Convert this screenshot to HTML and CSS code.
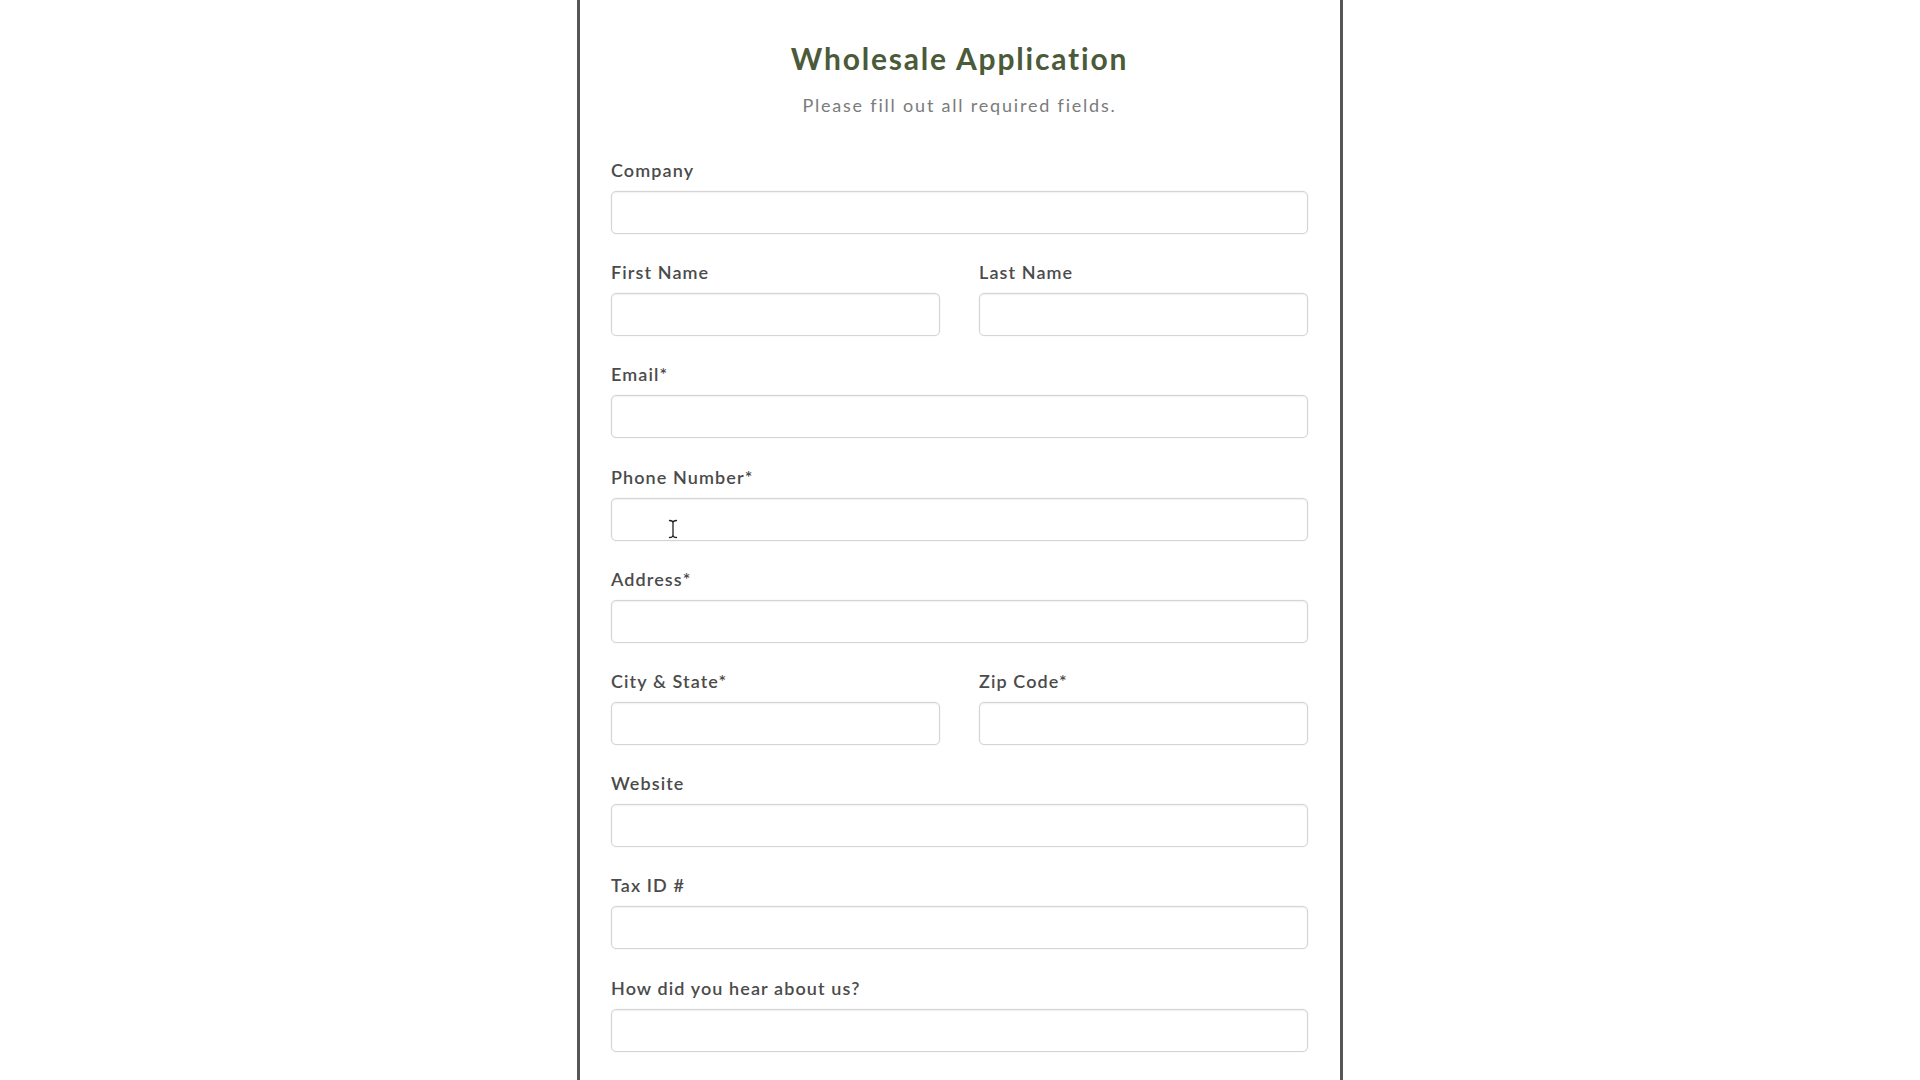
FILE: index.html
```html
<!DOCTYPE html>
<html lang="en">
<head>
<meta charset="utf-8">
<title>Wholesale Application</title>
<link rel="stylesheet" href="styles.css">
</head>
<body>
<main class="sheet">
  <header class="head">
    <h1 class="title">Wholesale Application</h1>
    <p class="subtitle">Please fill out all required fields.</p>
  </header>
  <form class="form">
    <div class="field">
      <label class="label">Company</label>
      <div class="input"></div>
    </div>
    <div class="row">
      <div class="field">
        <label class="label">First Name</label>
        <div class="input"></div>
      </div>
      <div class="field">
        <label class="label">Last Name</label>
        <div class="input"></div>
      </div>
    </div>
    <div class="field">
      <label class="label">Email*</label>
      <div class="input"></div>
    </div>
    <div class="field">
      <label class="label">Phone Number*</label>
      <div class="input has-cursor">
        <svg class="ibeam" width="10" height="20" viewBox="0 0 10 20" aria-hidden="true">
          <path d="M1.5 1.5 Q5 1.5 5 4 Q5 1.5 8.5 1.5 M5 4 V16 M1.5 18.5 Q5 18.5 5 16 Q5 18.5 8.5 18.5" fill="none" stroke="#ffffff" stroke-width="3" stroke-linecap="round"/>
          <path d="M1.5 1.5 Q5 1.5 5 4 Q5 1.5 8.5 1.5 M5 4 V16 M1.5 18.5 Q5 18.5 5 16 Q5 18.5 8.5 18.5" fill="none" stroke="#222222" stroke-width="1.3" stroke-linecap="round"/>
        </svg>
      </div>
    </div>
    <div class="field">
      <label class="label">Address*</label>
      <div class="input"></div>
    </div>
    <div class="row">
      <div class="field">
        <label class="label">City &amp; State*</label>
        <div class="input"></div>
      </div>
      <div class="field">
        <label class="label">Zip Code*</label>
        <div class="input"></div>
      </div>
    </div>
    <div class="field">
      <label class="label">Website</label>
      <div class="input"></div>
    </div>
    <div class="field">
      <label class="label">Tax ID #</label>
      <div class="input"></div>
    </div>
    <div class="field">
      <label class="label">How did you hear about us?</label>
      <div class="input"></div>
    </div>
  </form>
</main>
</body>
</html>
```

FILE: styles.css
```css
* { box-sizing: border-box; }

html, body {
  margin: 0;
  padding: 0;
  background: #ffffff;
  height: 1080px;
  overflow: hidden;
}

body {
  font-family: Lato, "Open Sans", "Liberation Sans", sans-serif;
}

.sheet {
  width: 766px;
  height: 1080px;
  margin: 0 auto;
  border-left: 3px solid #565656;
  border-right: 3px solid #565656;
  padding: 40px 32px 0 31px;
  background: #ffffff;
}

.head {
  text-align: center;
}

.title {
  margin: 0;
  font-size: 30px;
  line-height: 36px;
  font-weight: 700;
  color: #4b5a39;
  letter-spacing: 1.8px;
}

.subtitle {
  margin: 18px 0 0;
  font-size: 18px;
  line-height: 22px;
  font-weight: 400;
  color: #7b7b7b;
  letter-spacing: 1.8px;
}

.form {
  margin-top: 43px;
  display: flex;
  flex-direction: column;
  gap: 27.2px;
}

.row {
  display: grid;
  grid-template-columns: 1fr 1fr;
  column-gap: 39px;
}

.field {
  display: flex;
  flex-direction: column;
}

.label {
  display: block;
  font-size: 18px;
  line-height: 22px;
  font-weight: 600;
  color: #4b4b4b;
  letter-spacing: 1.1px;
  margin-bottom: 10px;
}

.input {
  height: 43px;
  border: 1px solid #d4d4d4;
  border-radius: 5px;
  background: #ffffff;
  box-shadow: inset 0 1px 2px rgba(0, 0, 0, 0.06), 0 0 0 0.5px rgba(0, 0, 0, 0.04);
}

.has-cursor {
  position: relative;
}

.ibeam {
  position: absolute;
  left: 56px;
  top: 20px;
}
```
